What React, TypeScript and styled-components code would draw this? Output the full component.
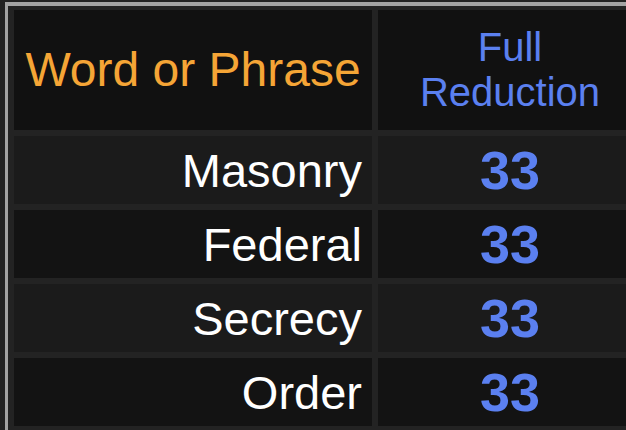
import React from "react";
import styled, { createGlobalStyle } from "styled-components";

const GlobalStyle = createGlobalStyle`
  html, body {
    margin: 0;
    padding: 0;
    background: #222222;
    overflow: hidden;
  }
  body {
    font-family: "Liberation Sans", Arial, Helvetica, sans-serif;
  }
`;

const rows = ["Masonry", "Federal", "Secrecy", "Order"];

export default function App() {
  return (
    <>
      <GlobalStyle />
      <Page>
        <Table>
          <HeadCell $color="#f5a536" $size={48}>Word or Phrase</HeadCell>
          <HeadCell $color="#5b80f0" $size={40}>
            Full
            <br />
            Reduction
          </HeadCell>
          {rows.map((word, i) => (
            <React.Fragment key={word}>
              <WordCell $odd={i % 2 === 1}>{word}</WordCell>
              <ValueCell $odd={i % 2 === 1}>33</ValueCell>
            </React.Fragment>
          ))}
        </Table>
      </Page>
    </>
  );
}

const Page = styled.div`
  padding: 2px 0 0 5px;
  width: 700px;
`;

const Table = styled.div`
  display: grid;
  grid-template-columns: 358px 264px;
  grid-template-rows: 120px repeat(4, 68px);
  gap: 6px;
  padding: 4px 6px 6px 6px;
  border-top: 4px solid #a3a3a3;
  border-left: 3px solid #a3a3a3;
  background: #232323;
  width: max-content;
`;

const HeadCell = styled.div<{ $color: string; $size: number }>`
  background: #111111;
  color: ${(p) => p.$color};
  font-size: ${(p) => p.$size}px;
  line-height: 1.12;
  display: flex;
  align-items: center;
  justify-content: center;
  text-align: center;
`;

const WordCell = styled.div<{ $odd: boolean }>`
  background: ${(p) => (p.$odd ? "#131313" : "#1b1b1b")};
  color: #ffffff;
  font-size: 47px;
  display: flex;
  align-items: center;
  justify-content: flex-end;
  padding-right: 10px;
`;

const ValueCell = styled.div<{ $odd: boolean }>`
  background: ${(p) => (p.$odd ? "#131313" : "#1b1b1b")};
  color: #5b80f0;
  font-size: 54px;
  font-weight: bold;
  display: flex;
  align-items: center;
  justify-content: center;
`;
